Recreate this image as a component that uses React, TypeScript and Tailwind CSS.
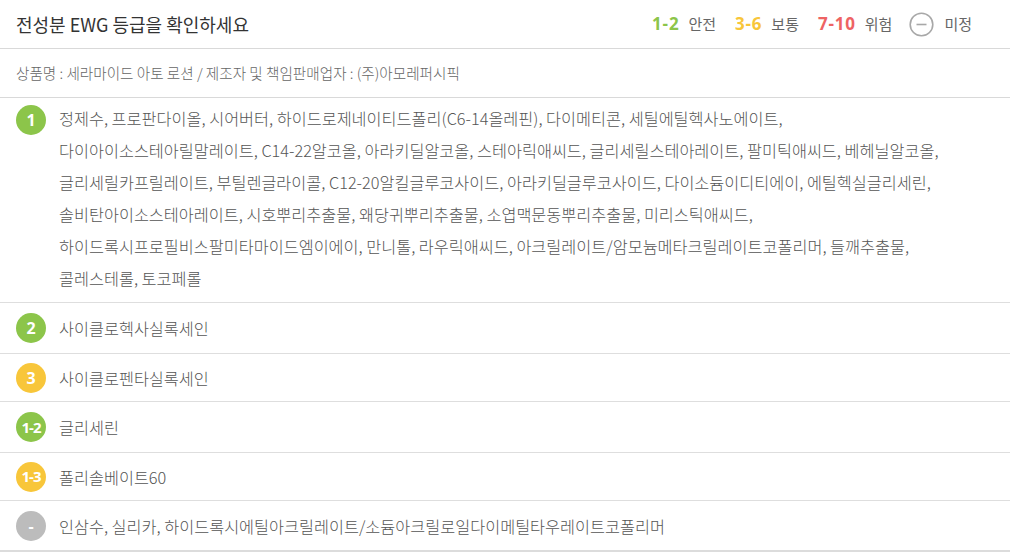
import React from "react";

const font = { fontFamily: '"Noto Sans CJK KR", "Noto Sans", sans-serif' };
const numFont = { fontFamily: '"Open Sans", "Noto Sans", sans-serif' };

type Row = { grade: string; tone: "green" | "yellow" | "gray"; h: string; text: string[] };

const rows: Row[] = [
  {
    grade: "1",
    tone: "green",
    h: "",
    text: [
      "정제수, 프로판다이올, 시어버터, 하이드로제네이티드폴리(C6-14올레핀), 다이메티콘, 세틸에틸헥사노에이트,",
      "다이아이소스테아릴말레이트, C14-22알코올, 아라키딜알코올, 스테아릭애씨드, 글리세릴스테아레이트, 팔미틱애씨드, 베헤닐알코올,",
      "글리세릴카프릴레이트, 부틸렌글라이콜, C12-20알킬글루코사이드, 아라키딜글루코사이드, 다이소듐이디티에이, 에틸헥실글리세린,",
      "솔비탄아이소스테아레이트, 시호뿌리추출물, 왜당귀뿌리추출물, 소엽맥문동뿌리추출물, 미리스틱애씨드,",
      "하이드록시프로필비스팔미타마이드엠이에이, 만니톨, 라우릭애씨드, 아크릴레이트/암모늄메타크릴레이트코폴리머, 들깨추출물,",
      "콜레스테롤, 토코페롤",
    ],
  },
  { grade: "2", tone: "green", h: "h-[51px]", text: ["사이클로헥사실록세인"] },
  { grade: "3", tone: "yellow", h: "h-[48px]", text: ["사이클로펜타실록세인"] },
  { grade: "1-2", tone: "green", h: "h-[51px]", text: ["글리세린"] },
  { grade: "1-3", tone: "yellow", h: "h-[48px]", text: ["폴리솔베이트60"] },
  {
    grade: "-",
    tone: "gray",
    h: "h-[50px]",
    text: ["인삼수, 실리카, 하이드록시에틸아크릴레이트/소듐아크릴로일다이메틸타우레이트코폴리머"],
  },
];

const toneClass = {
  green: "bg-[#8cc54a]",
  yellow: "bg-[#f8c63a]",
  gray: "bg-[#bcbcbc]",
};

function Badge({ grade, tone }: { grade: string; tone: Row["tone"] }) {
  return (
    <div
      className={`flex size-[30px] shrink-0 items-center justify-center rounded-full font-bold text-white ${toneClass[tone]} ${
        grade.length > 1 ? "text-[15px] tracking-[-1px]" : "text-[16px]"
      }`}
      style={numFont}
    >
      {grade}
    </div>
  );
}

export default function App() {
  return (
    <div className="min-h-screen w-[1010px] bg-white text-[#555]" style={font}>
      <header className="flex h-[49px] items-center justify-between border-b border-[#d9d9d9] pl-[16px] pr-[38px]">
        <h1 className="text-[18px] font-normal text-[#333]">전성분 EWG 등급을 확인하세요</h1>
        <div className="flex items-center text-[15px] text-[#666]">
          <span className="text-[17px] font-bold tracking-[0.8px] text-[#8cc54a]" style={numFont}>
            1-2
          </span>
          <span className="ml-[9px]">안전</span>
          <span className="ml-[19px] text-[17px] font-bold tracking-[0.8px] text-[#f8c63a]" style={numFont}>
            3-6
          </span>
          <span className="ml-[9px]">보통</span>
          <span className="ml-[19px] text-[17px] font-bold tracking-[0.8px] text-[#ee6363]" style={numFont}>
            7-10
          </span>
          <span className="ml-[9px]">위험</span>
          <svg className="ml-[17px]" width="25" height="25" viewBox="0 0 25 25" fill="none">
            <circle cx="12.5" cy="12.5" r="11.3" stroke="#a8a8a8" strokeWidth="1.6" />
            <line x1="7.5" y1="12.5" x2="17.5" y2="12.5" stroke="#a8a8a8" strokeWidth="1.6" />
          </svg>
          <span className="ml-[10px]">미정</span>
        </div>
      </header>

      <div className="flex h-[49px] items-center border-b border-[#d9d9d9] px-[16px] text-[14.6px] font-light text-[#666]">
        상품명 : 세라마이드 아토 로션 / 제조자 및 책임판매업자 : (주)아모레퍼시픽
      </div>

      <div className="border-b-2 border-[#dcdcdc]">
        {rows.map((row, i) => (
          <div
            key={row.grade}
            className={`flex gap-[13px] pl-[16px] ${i > 0 ? "border-t border-[#dedede]" : ""} ${
              row.text.length > 1 ? "pt-[4px] pb-[8px]" : `${row.h} items-center`
            }`}
          >
            <div className={row.text.length > 1 ? "pt-[3px]" : ""}>
              <Badge grade={row.grade} tone={row.tone} />
            </div>
            <div className="text-[16.3px] font-light leading-[32px] text-[#555]">
              {row.text.map((line) => (
                <div key={line}>{line}</div>
              ))}
            </div>
          </div>
        ))}
      </div>
    </div>
  );
}
